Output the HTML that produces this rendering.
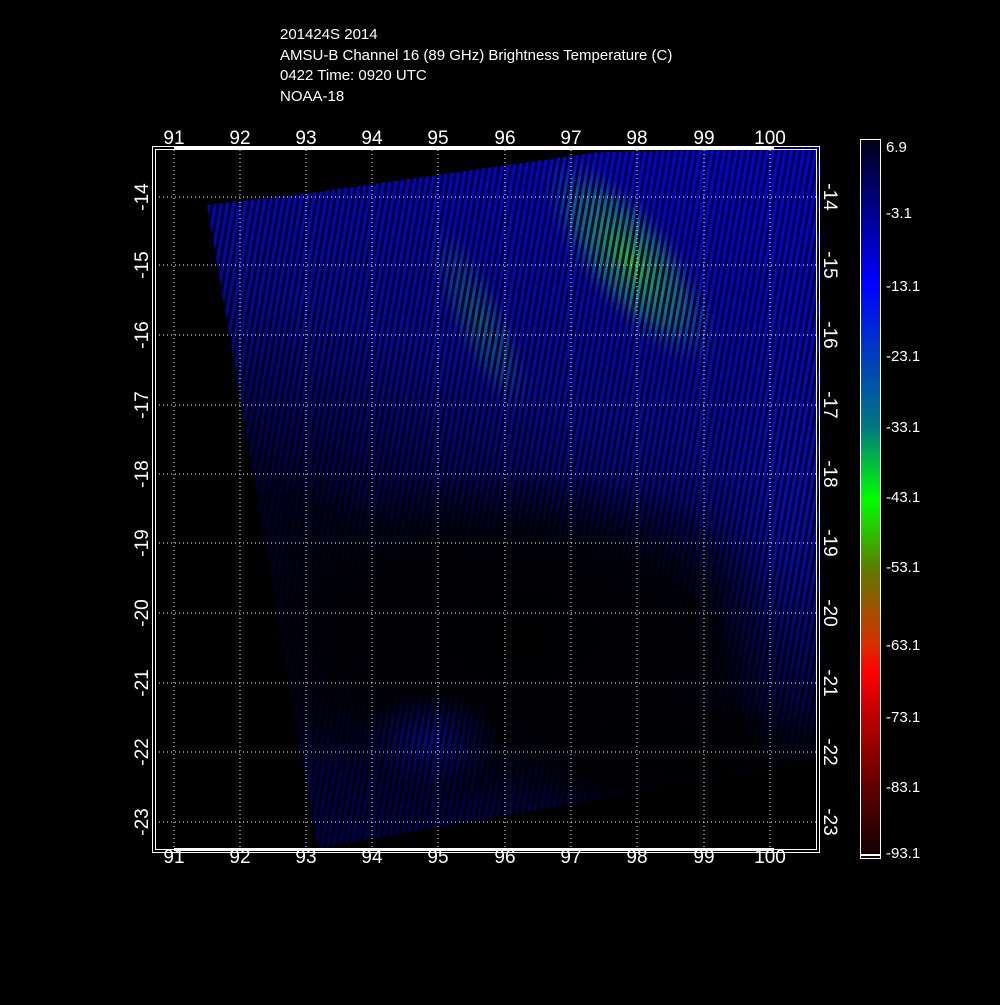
<!DOCTYPE html>
<html><head><style>
body{margin:0;background:#000;width:1000px;height:1000px;overflow:hidden;font-family:"Liberation Sans",sans-serif;}
</style></head><body>
<svg width="1000" height="1000" xmlns="http://www.w3.org/2000/svg" font-family="Liberation Sans, sans-serif">
<defs>
<linearGradient id="cb" x1="0" y1="0" x2="0" y2="1">
<stop offset="0" stop-color="#000018"/><stop offset="0.2" stop-color="#0000ff"/>
<stop offset="0.4" stop-color="#007880"/><stop offset="0.5" stop-color="#00ff00"/>
<stop offset="0.6" stop-color="#607800"/><stop offset="0.7" stop-color="#d83000"/>
<stop offset="0.74" stop-color="#ff0000"/><stop offset="0.8" stop-color="#c00000"/>
<stop offset="0.9" stop-color="#600000"/><stop offset="1" stop-color="#100000"/>
</linearGradient>
<linearGradient id="sw" x1="0.7" y1="0" x2="0.35" y2="1">
<stop offset="0" stop-color="#0000f0"/><stop offset="0.35" stop-color="#0008b0"/>
<stop offset="0.6" stop-color="#000030"/><stop offset="1" stop-color="#000050"/>
</linearGradient>
<radialGradient id="gr" cx="0.5" cy="0.5" r="0.5">
<stop offset="0" stop-color="#30b050"/><stop offset="0.6" stop-color="#108090" stop-opacity="0.7"/><stop offset="1" stop-color="#1040c0" stop-opacity="0"/>
</radialGradient>
<radialGradient id="bl" cx="0.5" cy="0.5" r="0.5">
<stop offset="0" stop-color="#0010e0" stop-opacity="0.6"/><stop offset="1" stop-color="#0010e0" stop-opacity="0"/>
</radialGradient>
<radialGradient id="dk" cx="0.5" cy="0.5" r="0.5">
<stop offset="0" stop-color="#000000" stop-opacity="1"/><stop offset="0.6" stop-color="#000" stop-opacity="0.8"/><stop offset="1" stop-color="#000" stop-opacity="0"/>
</radialGradient>
<pattern id="st" width="6" height="6" patternUnits="userSpaceOnUse" patternTransform="rotate(10)">
<rect x="3" width="3" height="6" fill="#000" opacity="0.85"/>
</pattern>
<clipPath id="cp"><polygon points="207,205 310,193 600,152 820,147 820,760 318,848"/></clipPath>
</defs>
<g clip-path="url(#cp)">
<rect x="150" y="140" width="680" height="720" fill="url(#sw)"/>
<ellipse cx="630" cy="260" rx="50" ry="130" transform="rotate(-38 630 260)" fill="url(#gr)"/>
<ellipse cx="480" cy="320" rx="30" ry="110" transform="rotate(-25 480 320)" fill="url(#gr)" opacity="0.45"/>
<ellipse cx="520" cy="640" rx="300" ry="170" fill="url(#dk)"/>
<ellipse cx="700" cy="760" rx="180" ry="70" fill="url(#dk)"/>
<ellipse cx="300" cy="620" rx="80" ry="160" fill="url(#dk)" opacity="0.4"/>
<ellipse cx="790" cy="520" rx="80" ry="260" fill="url(#bl)"/>
<ellipse cx="430" cy="740" rx="70" ry="50" fill="url(#bl)"/>
<rect x="150" y="140" width="680" height="720" fill="url(#st)"/>
</g>
<g stroke="#fff" stroke-dasharray="1,3" stroke-width="1">
<line x1="174" y1="150" x2="174" y2="850"/><line x1="240" y1="150" x2="240" y2="850"/>
<line x1="306" y1="150" x2="306" y2="850"/><line x1="372" y1="150" x2="372" y2="850"/>
<line x1="438" y1="150" x2="438" y2="850"/><line x1="505" y1="150" x2="505" y2="850"/>
<line x1="571" y1="150" x2="571" y2="850"/><line x1="637" y1="150" x2="637" y2="850"/>
<line x1="704" y1="150" x2="704" y2="850"/><line x1="770" y1="150" x2="770" y2="850"/>
<line x1="155" y1="197" x2="818" y2="197"/><line x1="155" y1="265" x2="818" y2="265"/>
<line x1="155" y1="335" x2="818" y2="335"/><line x1="155" y1="405" x2="818" y2="405"/>
<line x1="155" y1="474" x2="818" y2="474"/><line x1="155" y1="543" x2="818" y2="543"/>
<line x1="155" y1="613" x2="818" y2="613"/><line x1="155" y1="683" x2="818" y2="683"/>
<line x1="155" y1="752" x2="818" y2="752"/><line x1="155" y1="822" x2="818" y2="822"/>
</g>
<rect x="152.5" y="146.5" width="667" height="706" fill="none" stroke="#fff"/>
<rect x="155.5" y="149.5" width="661" height="700" fill="none" stroke="#fff"/>
<rect x="174" y="147" width="600" height="3" fill="#fff"/>
<rect x="174" y="848" width="600" height="3" fill="#fff"/>
<g fill="#fff" font-size="19" text-anchor="middle">
<text x="174" y="144">91</text><text x="240" y="144">92</text><text x="306" y="144">93</text>
<text x="372" y="144">94</text><text x="438" y="144">95</text><text x="505" y="144">96</text>
<text x="571" y="144">97</text><text x="637" y="144">98</text><text x="704" y="144">99</text>
<text x="770" y="144">100</text>
<text x="174" y="863">91</text><text x="240" y="863">92</text><text x="306" y="863">93</text>
<text x="372" y="863">94</text><text x="438" y="863">95</text><text x="505" y="863">96</text>
<text x="571" y="863">97</text><text x="637" y="863">98</text><text x="704" y="863">99</text>
<text x="770" y="863">100</text>
</g>
<g fill="#fff" font-size="19" text-anchor="middle">
<text transform="translate(148,197) rotate(-90)">-14</text><text transform="translate(148,265) rotate(-90)">-15</text>
<text transform="translate(148,335) rotate(-90)">-16</text><text transform="translate(148,405) rotate(-90)">-17</text>
<text transform="translate(148,474) rotate(-90)">-18</text><text transform="translate(148,543) rotate(-90)">-19</text>
<text transform="translate(148,613) rotate(-90)">-20</text><text transform="translate(148,683) rotate(-90)">-21</text>
<text transform="translate(148,752) rotate(-90)">-22</text><text transform="translate(148,822) rotate(-90)">-23</text>
<text transform="translate(824,197) rotate(90)">-14</text><text transform="translate(824,265) rotate(90)">-15</text>
<text transform="translate(824,335) rotate(90)">-16</text><text transform="translate(824,405) rotate(90)">-17</text>
<text transform="translate(824,474) rotate(90)">-18</text><text transform="translate(824,543) rotate(90)">-19</text>
<text transform="translate(824,613) rotate(90)">-20</text><text transform="translate(824,683) rotate(90)">-21</text>
<text transform="translate(824,752) rotate(90)">-22</text><text transform="translate(824,822) rotate(90)">-23</text>
</g>
<rect x="860.5" y="139.5" width="20" height="719" fill="url(#cb)" stroke="#fff"/>
<rect x="861" y="854" width="19" height="2" fill="#fff"/>
<g fill="#fff" font-size="15">
<text x="886" y="152">6.9</text><text x="886" y="218">-3.1</text><text x="886" y="291">-13.1</text>
<text x="886" y="361">-23.1</text><text x="886" y="432">-33.1</text><text x="886" y="502">-43.1</text>
<text x="886" y="572">-53.1</text><text x="886" y="650">-63.1</text><text x="886" y="722">-73.1</text>
<text x="886" y="792">-83.1</text><text x="886" y="858">-93.1</text>
</g>
<g fill="#fff" font-size="15">
<text x="280" y="39">201424S 2014</text>
<text x="280" y="60">AMSU-B Channel 16 (89 GHz) Brightness Temperature (C)</text>
<text x="280" y="80">0422 Time: 0920 UTC</text>
<text x="280" y="101">NOAA-18</text>
</g>
</svg>
</body></html>
